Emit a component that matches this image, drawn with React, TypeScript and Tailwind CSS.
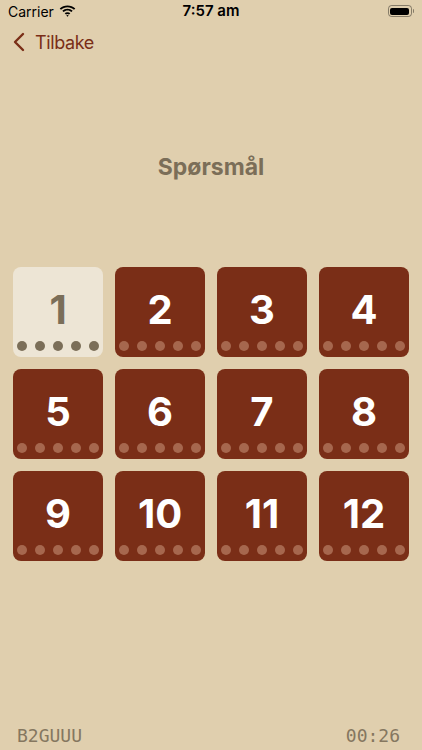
import React from 'react';

const tiles = Array.from({ length: 12 }, (_, i) => i + 1);

function WifiIcon() {
  return (
    <svg width="17" height="12" viewBox="0 0 17 12">
      <path d="M8.5 2.2c2.5 0 4.8 1 6.5 2.6l1.3-1.3C14.3 1.6 11.5.4 8.5.4S2.7 1.6.7 3.5L2 4.8c1.7-1.6 4-2.6 6.5-2.6z" fill="#000" />
      <path d="M8.5 5.6c1.5 0 2.9.6 3.9 1.5l1.3-1.3C12.3 4.5 10.5 3.8 8.5 3.8S4.7 4.5 3.3 5.8l1.3 1.3c1-.9 2.4-1.5 3.9-1.5z" fill="#000" />
      <path d="M8.5 9c.6 0 1.1.2 1.5.6l1.3-1.3c-.7-.7-1.7-1.1-2.8-1.1s-2.1.4-2.8 1.1L7 9.6c.4-.4.9-.6 1.5-.6z" fill="#000" />
      <path d="M8.5 11.8l1.2-1.2c-.3-.3-.7-.5-1.2-.5s-.9.2-1.2.5z" fill="#000" />
    </svg>
  );
}

function Battery() {
  return (
    <div className="flex items-center">
      <div className="w-[24px] h-[12px] rounded-[3.5px] border border-black/40 p-[1.5px]">
        <div className="w-full h-full rounded-[2px] bg-black" />
      </div>
      <div className="w-[1.5px] h-[4px] rounded-r-sm bg-black/40 ml-[1px]" />
    </div>
  );
}

function Tile({ n }: { n: number }) {
  const active = n === 1;
  return (
    <div
      className={`w-[90px] h-[90px] rounded-[8px] flex flex-col ${
        active ? 'bg-[#ede5d5]' : 'bg-[#7a2e17]'
      }`}
    >
      <div
        className={`flex-1 flex items-center justify-center pt-[12px] text-[40px] font-bold leading-none ${
          active ? 'text-[#7b6e58]' : 'text-white'
        }`}
        style={{ fontFamily: 'Inter, "Noto Sans", sans-serif' }}
      >
        {n}
      </div>
      <div className="flex justify-between px-[4px] pb-[6px]">
        {[0, 1, 2, 3, 4].map((d) => (
          <div
            key={d}
            className={`w-[10px] h-[10px] rounded-full ${
              active ? 'bg-[#7b6e58]' : 'bg-[#a6674e]'
            }`}
          />
        ))}
      </div>
    </div>
  );
}

export default function App() {
  return (
    <div
      className="w-[422px] h-[750px] bg-[#e0cfae] flex flex-col overflow-hidden"
      style={{ fontFamily: 'Inter, "Noto Sans", sans-serif' }}
    >
      {/* status bar */}
      <div className="h-[22px] flex items-center justify-between px-[8px] relative text-black">
        <div className="flex items-center gap-[5px] text-[14px]">
          <span>Carrier</span>
          <WifiIcon />
        </div>
        <span className="absolute left-1/2 -translate-x-1/2 text-[15px] font-semibold">7:57 am</span>
        <Battery />
      </div>

      {/* nav */}
      <div className="h-[40px] flex items-center pl-[13px] text-[#7a2e17]">
        <svg width="12" height="20" viewBox="0 0 12 20" className="mr-[10px]">
          <path d="M10 2L2 10l8 8" stroke="#7a2e17" strokeWidth="2.4" fill="none" strokeLinecap="round" strokeLinejoin="round" />
        </svg>
        <span className="text-[18px] tracking-[-0.4px]">Tilbake</span>
      </div>

      <div className="mt-[88px] text-center text-[23px] font-bold text-[#7b6e58]">Spørsmål</div>

      <div className="mt-[82px] grid grid-cols-4 gap-x-[12px] gap-y-[12px] px-[13px]">
        {tiles.map((n) => (
          <Tile key={n} n={n} />
        ))}
      </div>

      <div className="flex-1" />

      <div
        className="flex justify-between items-center pl-[17px] pr-[22px] h-[30px] text-[18px] font-light text-[#857760]"
        style={{ fontFamily: '"DejaVu Sans Mono", "Liberation Mono", monospace' }}
      >
        <span>B2GUUU</span>
        <span>00:26</span>
      </div>
    </div>
  );
}
